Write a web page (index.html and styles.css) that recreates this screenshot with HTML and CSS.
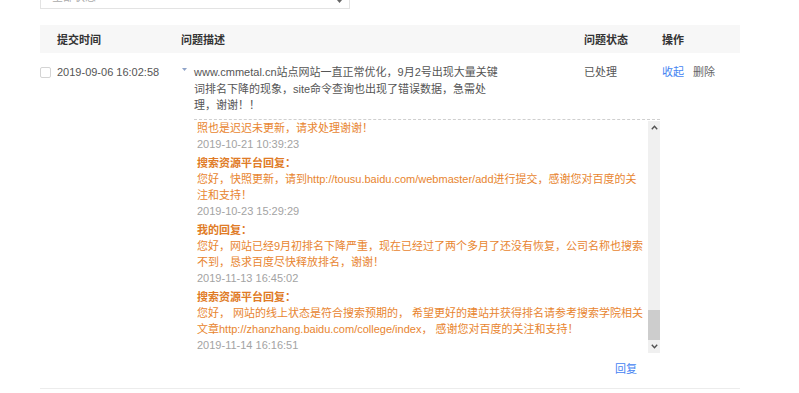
FILE: index.html
```html
<!DOCTYPE html>
<html lang="zh-CN">
<head>
<meta charset="utf-8">
<title>问题反馈</title>
<link rel="stylesheet" href="styles.css">
</head>
<body>
<div class="page">
  <div class="filter">
    <span class="filter-text">全部状态</span>
    <svg class="filter-caret" width="5" height="3" viewBox="0 0 5 3"><path d="M0 0 L5 0 L2.5 3 Z" fill="#666"/></svg>
  </div>

  <div class="table">
    <div class="thead">
      <div></div>
      <div class="th">提交时间</div>
      <div class="th">问题描述</div>
      <div class="th">问题状态</div>
      <div class="th">操作</div>
    </div>

    <div class="row">
      <div class="cell"><span class="checkbox"></span></div>
      <div class="cell date">2019-09-06 16:02:58</div>
      <div class="cell desc">
        <span class="tri"><svg width="5" height="3" viewBox="0 0 5 3"><path d="M0 0 L5 0 L2.5 3 Z" fill="#8fa3c8"/></svg></span>
        <div class="desc-text">www.cmmetal.cn站点网站一直正常优化，9月2号出现大量关键<br>词排名下降的现象，site命令查询也出现了错误数据，急需处<br>理，谢谢！！</div>
      </div>
      <div class="cell status">已处理</div>
      <div class="cell ops"><a class="link">收起</a><a class="del">删除</a></div>

      <div class="expand">
        <div class="thread">
          <div class="msg">
            <div class="msg-text">照也是迟迟未更新，请求处理谢谢！</div>
            <div class="msg-date">2019-10-21 10:39:23</div>
          </div>
          <div class="msg">
            <div class="msg-title">搜索资源平台回复：</div>
            <div class="msg-text">您好，快照更新，请到http://tousu.baidu.com/webmaster/add进行提交，感谢您对百度的关<br>注和支持！</div>
            <div class="msg-date">2019-10-23 15:29:29</div>
          </div>
          <div class="msg">
            <div class="msg-title">我的回复：</div>
            <div class="msg-text">您好，网站已经9月初排名下降严重，现在已经过了两个多月了还没有恢复，公司名称也搜索<br>不到，恳求百度尽快释放排名，谢谢！</div>
            <div class="msg-date">2019-11-13 16:45:02</div>
          </div>
          <div class="msg">
            <div class="msg-title">搜索资源平台回复：</div>
            <div class="msg-text">您好， 网站的线上状态是符合搜索预期的， 希望更好的建站并获得排名请参考搜索学院相关<br>文章http://zhanzhang.baidu.com/college/index， 感谢您对百度的关注和支持！</div>
            <div class="msg-date">2019-11-14 16:16:51</div>
          </div>
        </div>
        <div class="scrollbar">
          <div class="sb-btn"><svg width="7" height="5" viewBox="0 0 7 5"><path d="M0.8 4.2 L3.5 1.3 L6.2 4.2" fill="none" stroke="#505050" stroke-width="1.4"/></svg></div>
          <div class="sb-track"><div class="sb-thumb"></div></div>
          <div class="sb-btn"><svg width="7" height="5" viewBox="0 0 7 5"><path d="M0.8 0.8 L3.5 3.7 L6.2 0.8" fill="none" stroke="#505050" stroke-width="1.4"/></svg></div>
        </div>
      </div>

      <div class="reply-row"><a class="link">回复</a></div>
    </div>
  </div>
</div>
</body>
</html>
```

FILE: styles.css
```css
html, body {
  margin: 0;
  padding: 0;
  background: #fff;
}

body {
  font-family: "Liberation Sans", "Noto Sans CJK SC", sans-serif;
  font-size: 11px;
  color: #555;
  overflow: hidden;
}

.page {
  padding-left: 40px;
}

.filter {
  box-sizing: border-box;
  width: 310px;
  height: 30px;
  margin-top: -21px;
  margin-bottom: 16px;
  border: 1px solid #e3e3e3;
  display: flex;
  align-items: center;
  justify-content: space-between;
  padding: 4px 7px 0 11px;
}

.filter-text {
  color: #aaa;
}

.filter-caret {
  align-self: flex-end;
  margin-bottom: 5px;
}

.table {
  width: 700px;
}

.thead {
  display: grid;
  grid-template-columns: 17px 124px 403px 78px 78px;
  height: 28px;
  align-items: center;
  background: #f7f7f7;
}

.th {
  font-weight: bold;
  color: #333;
}

.row {
  display: grid;
  grid-template-columns: 17px 124px 403px 78px 78px;
  padding-top: 11px;
  border-bottom: 1px solid #ececec;
  line-height: 16.5px;
}

.cell {
  line-height: 16.5px;
}

.checkbox {
  display: block;
  box-sizing: border-box;
  width: 11px;
  height: 11px;
  margin-top: 3px;
  border: 1px solid #d4d4d4;
  border-radius: 2px;
  background: #fff;
}

.date {
  color: #555;
}

.desc {
  display: flex;
}

.tri {
  width: 13px;
  flex: none;
  display: flex;
  padding-left: 1px;
  box-sizing: border-box;
  padding-top: 4px;
  align-items: flex-start;
}

.tri svg {
  display: block;
}

.desc-text {
  white-space: nowrap;
  color: #555;
}

.status {
  color: #555;
}

.ops {
  display: flex;
  gap: 9px;
}

.link {
  color: #4584f2;
  cursor: pointer;
}

.del {
  color: #666;
  cursor: pointer;
}

.expand {
  grid-column: 3 / 6;
  margin-left: 13px;
  width: 466px;
  margin-top: 5.5px;
  border-top: 1px dashed #cfcfcf;
  height: 234px;
  box-sizing: border-box;
  display: flex;
}

.thread {
  flex: 1;
  overflow: hidden;
  padding-left: 3px;
  line-height: 16px;
  white-space: nowrap;
}

.msg + .msg {
  margin-top: 3px;
}

.msg-title {
  color: #e07b26;
  font-weight: bold;
}

.msg-text {
  color: #e8852f;
}

.msg-date {
  color: #a3a3a3;
}

.scrollbar {
  width: 12px;
  flex: none;
  background: #f0f0f0;
  display: flex;
  flex-direction: column;
  margin-top: 1px;
}

.sb-btn {
  height: 13px;
  display: flex;
  align-items: center;
  justify-content: center;
}

.sb-btn svg {
  display: block;
}

.sb-track {
  flex: 1;
  display: flex;
  flex-direction: column;
  justify-content: flex-end;
}

.sb-thumb {
  height: 30px;
  background: #cdcdcd;
}

.reply-row {
  grid-column: 3 / 6;
  margin-left: 13px;
  width: 466px;
  box-sizing: border-box;
  padding-right: 23px;
  text-align: right;
  line-height: 16px;
  padding-top: 8px;
  padding-bottom: 11px;
}
```
